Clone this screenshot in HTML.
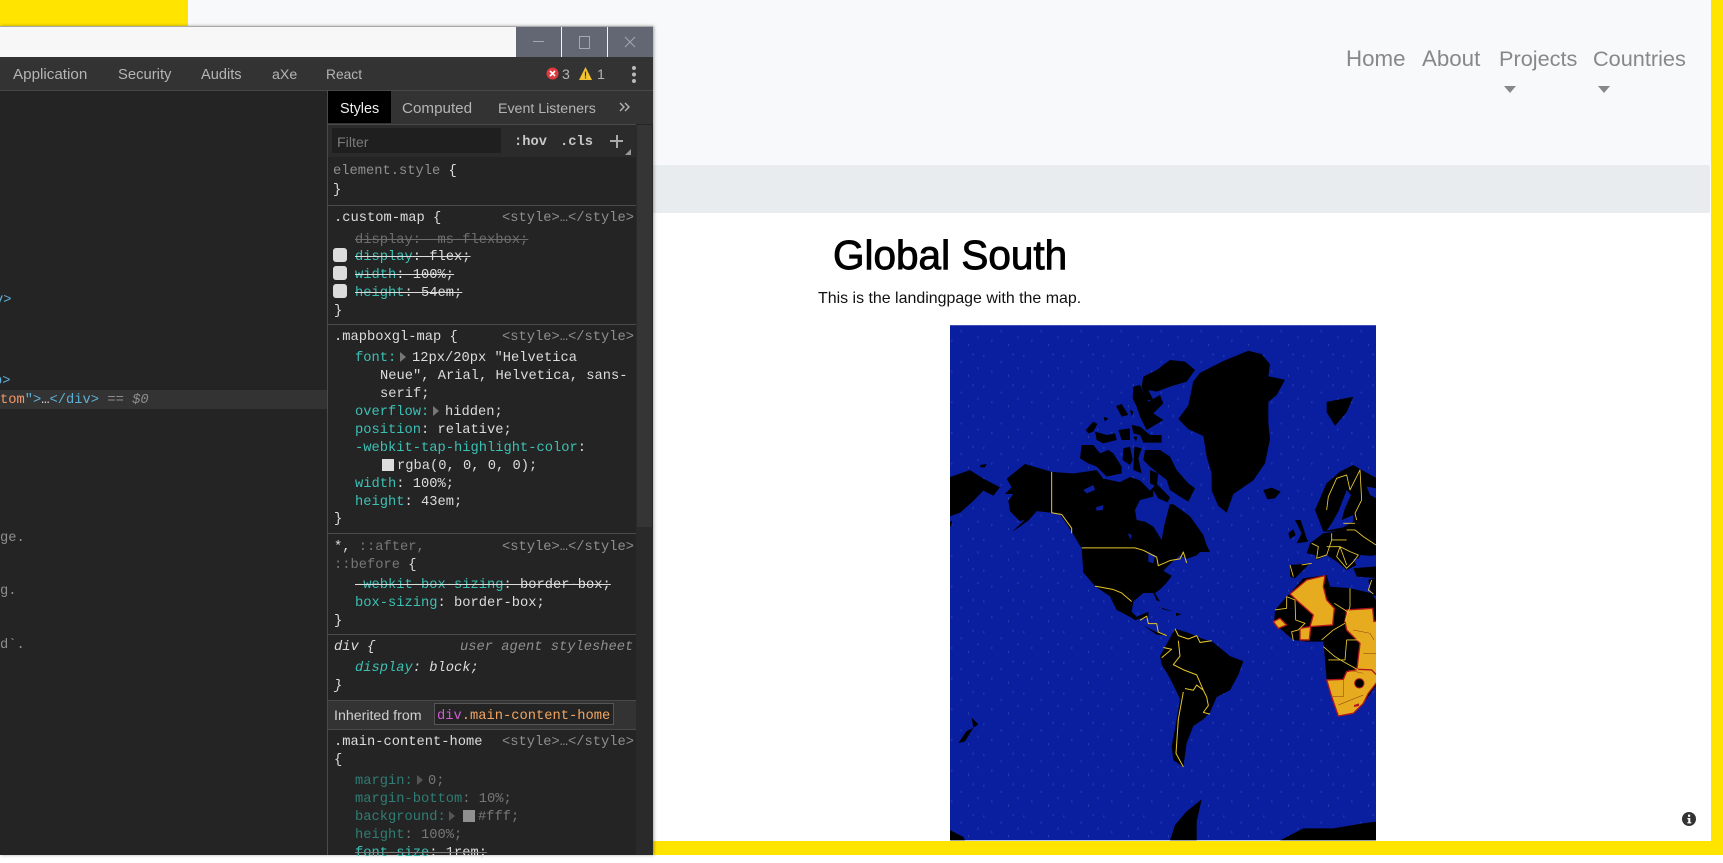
<!DOCTYPE html>
<html lang="en"><head><meta charset="utf-8"><title>Global South</title>
<style>
html,body{margin:0;padding:0;width:1723px;height:855px;overflow:hidden;background:#fff;font-family:"Liberation Sans",sans-serif}
.a{position:absolute}
.t{position:absolute;white-space:pre}
.m{position:absolute;white-space:pre;font:13.75px/18px "Liberation Mono",monospace;color:#dcdcdc;margin-top:1px}
.m[style*="left:355px"],.m[style*="left:380px"],.m[style*="left:397px"],.m[style*="left:412px"],.m[style*="left:445px"],.m[style*="left:428px"],.m[style*="left:478px"]{margin-top:3px}
.p{color:#3cc0b4}.d{color:#2f7d75}.g{color:#8e8e8e}.v{color:#777}
.s{text-decoration:line-through}
.n{position:absolute;white-space:pre;font-size:21.7px;line-height:26px;color:#888;top:46px}
.tb{position:absolute;white-space:pre;font-size:14.2px;line-height:18px;color:#b4b4b4}
.sep{position:absolute;left:328px;width:308px;height:1px;background:#4a4a4a}
.cb{position:absolute;left:333px;width:14px;height:14px;background:#dcdcdc;border-radius:3px}
.tri{position:absolute;width:0;height:0;border-left:6px solid #777;border-top:5px solid transparent;border-bottom:5px solid transparent}
</style></head><body>
<div class="a" style="left:188px;top:0;width:1523px;height:165px;background:#f8f9fa"></div>
<div class="a" style="left:0;top:0;width:188px;height:26px;background:#ffe400"></div>
<div class="a" style="left:1711px;top:0;width:12px;height:855px;background:#ffe400"></div>
<div class="a" style="left:653px;top:841px;width:1070px;height:14px;background:#ffe400"></div>
<div class="a" style="left:188px;top:165px;width:1522px;height:48px;background:#e9ecef;border-radius:2px"></div>

<div class="n" style="left:1346px;font-size:22.3px">Home</div>
<div class="n" style="left:1422px;font-size:22.3px">About</div>
<div class="n" style="left:1499px">Projects</div>
<div class="n" style="left:1593px">Countries</div>
<div class="a" style="left:1504px;top:86px;border-left:6px solid transparent;border-right:6px solid transparent;border-top:7px solid #888"></div>
<div class="a" style="left:1598px;top:86px;border-left:6px solid transparent;border-right:6px solid transparent;border-top:7px solid #888"></div>

<div class="t" style="left:833px;top:232px;font-size:40.5px;line-height:46px;color:#000;-webkit-text-stroke:.9px #000">Global South</div>
<div class="t" style="left:818px;top:289px;font-size:15.95px;line-height:20px;color:#111">This is the landingpage with the map.</div>

<svg class="a" style="left:940px;top:320px" width="450" height="535" viewBox="0 0 1350 1568" preserveAspectRatio="none">
<defs>
<clipPath id="c"><rect x="30" y="15" width="1278" height="1510"/></clipPath>
<pattern id="dots" width="120" height="90" patternUnits="userSpaceOnUse">
<g fill="#5a6fc0" opacity=".4"><rect x="10" y="12" width="3" height="6"/><rect x="62" y="30" width="3" height="6"/><rect x="98" y="8" width="3" height="6"/><rect x="34" y="58" width="3" height="6"/><rect x="84" y="70" width="3" height="6"/><rect x="112" y="48" width="3" height="6"/></g>
</pattern>
</defs>
<g clip-path="url(#c)">
<rect x="30" y="15" width="1278" height="1510" fill="#0a1fa0"/>
<rect x="30" y="15" width="1278" height="1510" fill="url(#dots)"/>
<g fill="#000">
<path d="M780,155L850,120L925,90L965,100L990,130L985,165L1035,175L1010,220L985,240L985,300L990,350L975,420L940,470L880,510L860,565L835,545L815,500L815,450L800,400L790,340L745,320L715,290L745,250L760,180Z"/>
<path d="M200,465L255,422L335,445L400,450L470,440L490,465L540,475L570,460L600,470L630,500L650,480L690,520L680,540L700,540L750,575L790,630L800,660L810,680L780,680L770,690L740,700L720,690L690,715L670,735L695,750L680,770L660,790L645,800L660,825L650,822L640,800L610,800L580,825L575,855L590,870L625,855L625,875L600,875L585,880L610,895L650,915L685,925L650,922L610,895L570,870L530,850L510,810L465,780L430,740L425,670L395,620L360,570L335,565L290,560L265,588L215,622L255,585L240,590L210,560L205,530L220,510L195,510L215,490Z"/>
<path d="M30,460L90,440L130,465L180,490L160,515L130,500L100,530L60,565L30,575Z"/>
<path d="M30,590L36,590L34,605L30,605Z"/>
<path d="M120,425L140,422L135,432L122,432Z"/>
<path d="M660,985L680,950L705,905L740,915L790,935L820,945L870,985L910,1000L895,1040L870,1085L830,1105L810,1150L790,1170L760,1190L740,1240L730,1310L700,1290L695,1250L710,1170L720,1110L690,1050L665,1010Z"/>
<path d="M1160,240L1240,225L1220,270L1185,310L1160,270Z"/>
<path d="M690,1525L705,1480L740,1440L785,1405L770,1470L770,1525Z"/>
<path d="M1020,1525L1090,1490L1180,1490L1270,1475L1308,1470L1308,1525Z"/>
<path d="M30,1495L70,1515L75,1525L30,1525Z"/>
<path d="M55,1240L80,1205L100,1195L75,1235Z"/>
<path d="M95,1165L115,1185L100,1195Z"/>
<path d="M655,840L700,855L670,848Z"/>
<path d="M708,858L725,862L708,868Z"/>
</g>
<g transform="scale(1,.977)">
<g fill="#000">
<path d="M610,170L650,150L690,120L735,125L765,150L740,185L690,200L650,215L625,210L640,240L620,240L605,200Z"/>
<path d="M580,200L600,195L625,245L660,225L670,250L640,280L670,300L620,330L600,290L590,260L578,235Z"/>
<path d="M528,258L545,252L565,285L545,290Z"/><path d="M570,270L580,275L575,290Z"/><path d="M490,290L505,295L495,305Z"/>
<path d="M437,330L460,305L472,312L460,335L445,340Z"/>
<path d="M465,335L500,345L525,340L530,360L490,370L470,360Z"/>
<path d="M535,330L570,325L570,360L545,360Z"/>
<path d="M575,315L600,320L630,345L665,345L665,368L610,368L600,345L580,340Z"/>
<path d="M580,350L592,350L588,365Z"/>
<path d="M425,375L460,375L480,400L505,390L520,400L545,440L545,460L500,470L470,440L445,430L420,415Z"/>
<path d="M550,385L570,380L578,420L570,435L548,420Z"/>
<path d="M583,380L605,385L595,415L605,460L580,450Z"/>
<path d="M615,390L660,390L690,410L710,450L745,490L765,505L745,545L720,530L690,510L680,480L655,460L630,440L610,420Z"/>
<path d="M630,450L655,460L650,500L630,490Z"/>
</g>
<g fill="#0a1fa0">
<path d="M585,570L600,540L640,530L640,510L655,535L690,550L672,620L665,660L640,620L615,605L590,600Z"/>
<path d="M430,510L460,495L465,510L440,520Z"/>
<path d="M468,562L490,555L488,570L470,572Z"/>
<path d="M563,640L575,645L572,658Z"/>
<path d="M625,700L645,705L640,730L625,725Z"/>
</g>
</g>
<g transform="translate(630,351.6) scale(1,.977)">
<g fill="#000">
<path d="M340,150L365,143L392,155L375,175L352,178Z"/>
<path d="M415,280L430,268L437,285L420,297Z"/>
<path d="M435,240L452,240L470,295L475,305L440,310L455,280Z"/>
<path d="M495,210L530,130L570,95L610,75L635,90L690,120L690,240L610,240L570,275L520,275L515,262Z"/>
<path d="M480,310L520,280L560,275L610,240L690,230L690,350L630,345L620,375L590,390L560,365L530,345L500,360L495,345L470,340Z"/>
<path d="M420,375L480,370L460,390L435,415L420,410Z"/>
<path d="M610,385L690,378L690,415L620,410Z"/>
<path d="M655,420L690,410L690,470L665,465Z"/>
<path d="M420,460L460,415L530,405L540,440L600,445L665,460L690,500L690,720L640,790L610,820L565,828L530,720L525,660L520,605L470,605L430,600L372,550L375,510L410,470Z"/>
</g>
<path d="M590,150L603,165L585,205L575,240L610,225L610,245L580,262L530,272L545,250L565,215Z" fill="#0a1fa0"/>
<path d="M650,140L678,145L678,175L660,165Z" fill="#0a1fa0"/>
<path d="M610,358L678,345L678,375L620,378Z" fill="#0a1fa0"/>
<g fill="#e6ab1e" stroke="#b3171b" stroke-width="4" stroke-linejoin="round">
<path d="M420,462L470,420L525,407L520,440L530,480L553,505L548,555L480,560L490,525L450,490Z"/>
<path d="M590,510L668,505L672,545L690,540L690,720L660,690L620,695L630,610L590,570L585,545Z"/>
<path d="M530,720L580,718L590,695L625,688L665,690L690,715L655,760L640,790L610,820L565,828L545,770Z"/>
<path d="M370,545L390,535L410,555L385,565Z"/>
<path d="M450,565L482,560L478,600L450,600Z"/>
</g>
<circle cx="628" cy="730" r="14" fill="#000" stroke="#b3171b" stroke-width="3"/>
<path d="M612,795l15,-5l0,8l-15,3z" fill="#b3171b"/>
<g fill="none" stroke="#8c3a16" stroke-width="1.5">
<path d="M580,720V770L548,770M565,795L640,765M595,690L640,700M610,570L660,580L672,600M640,640H690"/>
</g>
<g fill="none" stroke="#e8c832" stroke-width="2.6" stroke-linejoin="round">
<path d="M530,210L535,170L560,115L590,105L600,150L630,90L635,180L615,220L620,240"/>
<path d="M485,310L505,320L500,355L530,345L545,300V280M545,300H590M590,270H615L640,290L678,315M580,250H615M530,320H570L560,350L590,385L610,365L625,345L600,335L570,320L590,375M420,375L430,410M455,375L485,370M665,420L655,450L670,462"/>
<path d="M375,510L410,505V470L435,480L437,540L465,550L445,570L425,575L430,603M600,445V500L585,545M553,490L592,515M585,550L550,570L515,600M520,620L555,650L580,665L625,690M535,660H585L590,600H630"/>
</g>
</g>
<g fill="none" stroke="#e6c62a" stroke-width="3" stroke-linejoin="round">
<path d="M335,445V565L365,570L395,610L395,625"/>
<path d="M425,668H585L610,675L650,695L655,720L690,705L720,700L730,680L740,712"/>
<path d="M465,780L520,790L545,800L575,825"/>
<path d="M600,880L620,868L625,890L650,890L655,915L680,925"/>
<path d="M705,905L715,925L745,935L770,925L780,945L815,940"/>
<path d="M670,960L695,965L665,990"/>
<path d="M715,940L720,985L700,1010L730,1025L770,1040L790,1085L800,1105L805,1130L790,1150L810,1155"/>
<path d="M735,1080L760,1085L770,1070L790,1085"/>
<path d="M730,1090L715,1170L708,1270L730,1310"/>
</g>
</g>
</svg>

<svg class="a" style="left:1682px;top:812px" width="14" height="14" viewBox="0 0 14 14"><circle cx="7" cy="7" r="7" fill="#333"/><rect x="6" y="2.6" width="2.2" height="2.2" fill="#fff"/><path d="M5.4 6h2.9v4.2h1v1.2H5.3v-1.2h1V7.2h-.9z" fill="#fff"/></svg>

<div class="a" style="left:0;top:26px;width:653px;height:829px;background:#242424;box-shadow:1px 0 3px rgba(0,0,0,.35)"></div>
<div class="a" style="left:0;top:26px;width:653px;height:1px;background:#a9a9a9"></div>
<div class="a" style="left:0;top:27px;width:653px;height:30px;background:#f7f7f7"></div>
<div class="a" style="left:516px;top:27px;width:137px;height:30px;background:#636773"></div>
<div class="a" style="left:561px;top:27px;width:1px;height:30px;background:#f4f4f4"></div>
<div class="a" style="left:607px;top:27px;width:1px;height:30px;background:#f4f4f4"></div>
<div class="a" style="left:533px;top:41px;width:11px;height:1px;background:#a5a8b0"></div>
<div class="a" style="left:579px;top:36px;width:9px;height:11px;border:1px solid #a5a8b0"></div>
<svg class="a" style="left:624px;top:36px" width="12" height="12" viewBox="0 0 12 12"><path d="M1 1L11 11M11 1L1 11" stroke="#a5a8b0" stroke-width="1" fill="none"/></svg>

<div class="a" style="left:0;top:57px;width:653px;height:33px;background:#333"></div>
<div class="a" style="left:0;top:90px;width:653px;height:1px;background:#484848"></div>
<div class="tb" style="left:13px;top:66px;font-size:15.2px">Application</div>
<div class="tb" style="left:118px;top:66px;font-size:14.8px">Security</div>
<div class="tb" style="left:201px;top:66px;font-size:14.6px">Audits</div>
<div class="tb" style="left:272px;top:66px">aXe</div>
<div class="tb" style="left:326px;top:66px;font-size:13.8px">React</div>
<svg class="a" style="left:546px;top:67px" width="13" height="13" viewBox="0 0 13 13"><circle cx="6.5" cy="6.5" r="6" fill="#e0393e"/><path d="M4 4L9 9M9 4L4 9" stroke="#fff" stroke-width="1.6"/></svg>
<div class="tb" style="left:562px;top:66px">3</div>
<svg class="a" style="left:579px;top:67px" width="13" height="13" viewBox="0 0 13 13"><path d="M6.5 0L13 13H0z" fill="#f4c430"/><rect x="5.9" y="4.5" width="1.2" height="5" fill="#333"/><rect x="5.9" y="10.2" width="1.2" height="1.3" fill="#333"/></svg>
<div class="tb" style="left:597px;top:66px">1</div>
<div class="a" style="left:632px;top:66px;width:4px;height:4px;border-radius:2px;background:#bbb;box-shadow:0 6.5px 0 #bbb,0 13px 0 #bbb"></div>

<div class="a" style="left:0;top:390px;width:327px;height:19px;background:#333"></div>
<div class="m" style="left:-5px;top:291px;color:#5db0d7">v&gt;</div>
<div class="m" style="left:-6px;top:372px;color:#5db0d7">p&gt;</div>
<div class="m" style="left:0;top:391px"><span style="color:#f29766">tom</span><span style="color:#5db0d7">"&gt;</span>…<span style="color:#5db0d7">&lt;/div&gt;</span> <span class="g">== <i>$0</i></span></div>
<div class="m g" style="left:0;top:529px">ge.</div>
<div class="m g" style="left:0;top:582px">g.</div>
<div class="m g" style="left:0;top:636px">d`.</div>

<div class="a" style="left:327px;top:91px;width:1px;height:764px;background:#4a4a4a"></div>
<div class="a" style="left:328px;top:91px;width:325px;height:33px;background:#333"></div>
<div class="a" style="left:328px;top:91px;width:63px;height:32px;background:#000"></div>
<div class="a" style="left:328px;top:124px;width:308px;height:1px;background:#4a4a4a"></div>
<div class="tb" style="left:340px;top:100px;color:#f0f0f0;font-size:14.4px">Styles</div>
<div class="tb" style="left:402px;top:100px;font-size:15.2px">Computed</div>
<div class="tb" style="left:498px;top:100px">Event Listeners</div>
<svg class="a" style="left:619px;top:101px" width="12" height="12" viewBox="0 0 12 12"><path d="M1 2L5 6L1 10M6 2L10 6L6 10" stroke="#b4b4b4" stroke-width="1.4" fill="none"/></svg>
<div class="a" style="left:328px;top:125px;width:308px;height:32px;background:#2b2b2b"></div>
<div class="a" style="left:332px;top:128px;width:169px;height:25px;background:#1f1f1f"></div>
<div class="tb" style="left:337px;top:134px;color:#7a7a7a">Filter</div>
<div class="m" style="left:514px;top:133px;font-weight:bold;color:#c8c8c8">:hov</div>
<div class="m" style="left:560px;top:133px;font-weight:bold;color:#c8c8c8">.cls</div>
<div class="a" style="left:610px;top:140px;width:13px;height:2px;background:#aaa"></div>
<div class="a" style="left:615.5px;top:134.5px;width:2px;height:13px;background:#aaa"></div>
<div class="a" style="left:625px;top:149px;border-left:6px solid transparent;border-bottom:6px solid #999"></div>

<div class="a" style="left:636px;top:125px;width:17px;height:730px;background:#2a2a2a"></div>
<div class="a" style="left:637px;top:125px;width:15px;height:402px;background:#353535"></div>

<div class="m g" style="left:333px;top:162px">element.style <span style="color:#dcdcdc">{</span></div>
<div class="m" style="left:333px;top:181px">}</div>
<div class="sep" style="top:205px"></div>
<div class="m" style="left:334px;top:209px">.custom-map {</div>
<div class="m g" style="left:502px;top:209px">&lt;style&gt;…&lt;/style&gt;</div>
<div class="m s g" style="left:355px;top:229px;color:#6e6e6e">display: -ms-flexbox;</div>
<div class="cb" style="top:248px"></div><div class="cb" style="top:266px"></div><div class="cb" style="top:284px"></div>
<div class="m s" style="left:355px;top:246px"><span class="p">display</span>: flex;</div>
<div class="m s" style="left:355px;top:264px"><span class="p">width</span>: 100%;</div>
<div class="m s" style="left:355px;top:282px"><span class="p">height</span>: 54em;</div>
<div class="m" style="left:334px;top:302px">}</div>
<div class="sep" style="top:324px"></div>
<div class="m" style="left:334px;top:328px">.mapboxgl-map {</div>
<div class="m g" style="left:502px;top:328px">&lt;style&gt;…&lt;/style&gt;</div>
<div class="m p" style="left:355px;top:347px">font:</div><div class="tri" style="left:400px;top:352px"></div>
<div class="m" style="left:412px;top:347px">12px/20px "Helvetica</div>
<div class="m" style="left:380px;top:365px">Neue", Arial, Helvetica, sans-</div>
<div class="m" style="left:380px;top:383px">serif;</div>
<div class="m p" style="left:355px;top:401px">overflow:</div><div class="tri" style="left:433px;top:406px"></div>
<div class="m" style="left:445px;top:401px">hidden;</div>
<div class="m" style="left:355px;top:419px"><span class="p">position</span>: relative;</div>
<div class="m" style="left:355px;top:437px"><span class="p">-webkit-tap-highlight-color</span>:</div>
<div class="a" style="left:382px;top:459px;width:12px;height:12px;background:#ddd"></div>
<div class="m" style="left:397px;top:455px">rgba(0, 0, 0, 0);</div>
<div class="m" style="left:355px;top:473px"><span class="p">width</span>: 100%;</div>
<div class="m" style="left:355px;top:491px"><span class="p">height</span>: 43em;</div>
<div class="m" style="left:334px;top:510px">}</div>
<div class="sep" style="top:533px"></div>
<div class="m" style="left:334px;top:538px">*, <span style="color:#777">::after,</span></div>
<div class="m g" style="left:502px;top:538px">&lt;style&gt;…&lt;/style&gt;</div>
<div class="m" style="left:334px;top:556px"><span style="color:#777">::before</span> {</div>
<div class="m s" style="left:355px;top:574px"><span class="p">-webkit-box-sizing</span>: border-box;</div>
<div class="m" style="left:355px;top:592px"><span class="p">box-sizing</span>: border-box;</div>
<div class="m" style="left:334px;top:612px">}</div>
<div class="sep" style="top:634px"></div>
<div class="m" style="left:334px;top:638px;font-style:italic">div {</div>
<div class="m g" style="left:460px;top:638px;font-style:italic">user agent stylesheet</div>
<div class="m" style="left:355px;top:657px;font-style:italic"><span class="p">display</span>: block;</div>
<div class="m" style="left:334px;top:677px;font-style:italic">}</div>
<div class="a" style="left:328px;top:700px;width:308px;height:30px;background:#333;border-top:1px solid #4a4a4a;border-bottom:1px solid #4a4a4a;box-sizing:border-box"></div>
<div class="t" style="left:334px;top:707px;font-size:14.2px;line-height:18px;color:#d0d0d0">Inherited from</div>
<div class="a" style="left:434px;top:703px;width:180px;height:22px;background:#242424;border:1px solid #555;box-sizing:border-box"></div>
<div class="m" style="left:437px;top:707px"><span style="color:#d05cd0">div</span><span style="color:#f2a560">.main-content-home</span></div>
<div class="m" style="left:334px;top:733px">.main-content-home</div>
<div class="m g" style="left:502px;top:733px">&lt;style&gt;…&lt;/style&gt;</div>
<div class="m" style="left:334px;top:751px">{</div>
<div class="m d" style="left:355px;top:770px">margin:</div><div class="tri" style="left:417px;top:775px;border-left-color:#555"></div>
<div class="m v" style="left:428px;top:770px">0;</div>
<div class="m v" style="left:355px;top:788px"><span class="d">margin-bottom</span>: 10%;</div>
<div class="m d" style="left:355px;top:806px">background:</div><div class="tri" style="left:449px;top:811px;border-left-color:#555"></div>
<div class="a" style="left:463px;top:810px;width:12px;height:12px;background:#909090"></div>
<div class="m v" style="left:478px;top:806px">#fff;</div>
<div class="m v" style="left:355px;top:824px"><span class="d">height</span>: 100%;</div>
<div class="m s v" style="left:355px;top:842px"><span class="p">font-size</span><span style="color:#dcdcdc">: 1rem;</span></div>
</body></html>
